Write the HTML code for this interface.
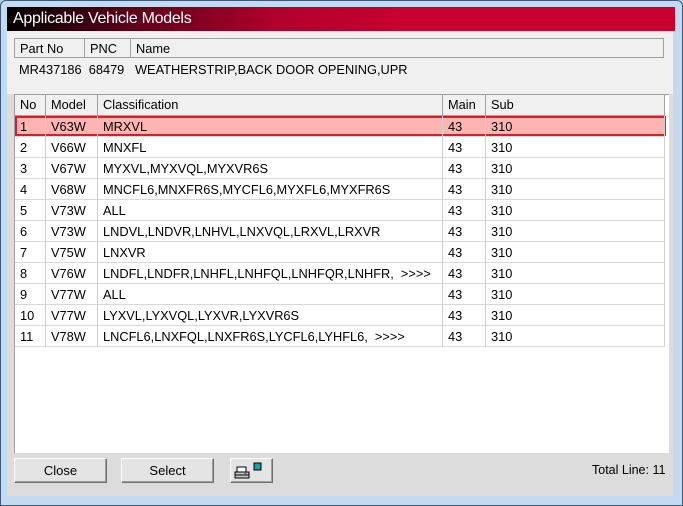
<!DOCTYPE html>
<html><head><meta charset="utf-8"><style>
*{box-sizing:border-box;margin:0;padding:0}
body{width:683px;height:506px;overflow:hidden;background:#b9d1ea;font-family:"Liberation Sans",Arial,sans-serif;font-size:12.8px;color:#000;position:relative}
.frame{position:absolute;left:0;top:0;width:683px;height:506px;border:1px solid #3c5a78;border-radius:6px 6px 0 0;background:#c4daf0}
.title{position:absolute;left:7px;top:7px;width:668px;height:24px;background:linear-gradient(90deg,#000 0%,#5a0018 18%,#b0002c 40%,#c8002f 60%,#c8002f 100%);color:#fff;font-size:16px;line-height:24px;padding-left:6px;letter-spacing:-0.3px}
.content{position:absolute;left:7px;top:31px;width:666px;height:465px;background:#dcdcdc}
.info{position:absolute;left:7px;top:31px;width:666px;height:63px;background:#f0f0f0}
.abs{position:absolute;white-space:nowrap}
.hdr{position:absolute;background:#f0f0f0;border:1px solid #a0a0a0;height:20px}
.hc{position:absolute;top:0;height:19px;line-height:19px;padding-left:5px;border-right:1px solid #a0a0a0;white-space:nowrap}
.body{position:absolute;left:14px;top:94px;width:655px;height:359px;background:#fff;border-left:1px solid #a0a0a0;border-top:1px solid #a0a0a0}
.row{position:absolute;left:0;width:650px;height:21px;border-bottom:1px solid #d8d8d8}
.c{position:absolute;top:0;height:21px;line-height:22px;padding-left:5px;border-right:1px solid #d0d0d0;white-space:nowrap}
.btn{position:absolute;top:458px;height:25px;background:#e4e4e4;border:1px solid;border-color:#fff #707070 #707070 #fff;box-shadow:inset -1px -1px 0 #a0a0a0;text-align:center;line-height:23px;font-size:13px}
</style></head><body>
<div class="frame"></div>
<div class="title">Applicable Vehicle Models</div>
<div class="content"></div>
<div class="info"></div>
<div class="hdr" style="left:14px;top:38px;width:650px">
<div class="hc" style="left:0;width:70px">Part No</div>
<div class="hc" style="left:70px;width:46px">PNC</div>
<div class="hc" style="left:116px;width:533px;border-right:none">Name</div>
</div>
<div class="abs" style="left:19px;top:62px">MR437186&nbsp;&nbsp;68479&nbsp;&nbsp;&nbsp;WEATHERSTRIP,BACK DOOR OPENING,UPR</div>
<div class="body">
<div class="hdr" style="left:-1px;top:-1px;width:651px;height:22px">
<div class="hc" style="left:0;width:31px;height:20px;line-height:20px">No</div>
<div class="hc" style="left:31px;width:52px;height:20px;line-height:20px">Model</div>
<div class="hc" style="left:83px;width:345px;height:20px;line-height:20px">Classification</div>
<div class="hc" style="left:428px;width:43px;height:20px;line-height:20px">Main</div>
<div class="hc" style="left:471px;width:178px;height:20px;line-height:20px;border-right:none">Sub</div>
</div>
<div style="position:absolute;left:0;top:21px;width:651px;height:20px;background:#ffb4b4;border:2px solid #d4202a"></div>
<div id="rows"></div>
</div>
<div class="btn" style="left:14px;width:93px">Close</div>
<div class="btn" style="left:121px;width:93px">Select</div>
<div class="btn" style="left:230px;width:43px">
<svg width="43" height="25" style="position:absolute;left:-1px;top:-1px" viewBox="0 0 43 25">
<rect x="7" y="9" width="9" height="5" fill="#fff" stroke="#000"/>
<path d="M5 14h14v6H5z" fill="#c8c8c8" stroke="#000"/>
<path d="M5 17h14" stroke="#000"/><rect x="14" y="15" width="3" height="1" fill="#0c0"/>
<rect x="24" y="5" width="7" height="7" fill="#1aa0a0" stroke="#000"/>
</svg></div>
<div class="abs" style="left:592px;top:463px;font-size:12.5px">Total Line: 11</div>
<script>
var d=[["1","V63W","MRXVL"],["2","V66W","MNXFL"],["3","V67W","MYXVL,MYXVQL,MYXVR6S"],["4","V68W","MNCFL6,MNXFR6S,MYCFL6,MYXFL6,MYXFR6S"],["5","V73W","ALL"],["6","V73W","LNDVL,LNDVR,LNHVL,LNXVQL,LRXVL,LRXVR"],["7","V75W","LNXVR"],["8","V76W","LNDFL,LNDFR,LNHFL,LNHFQL,LNHFQR,LNHFR,&nbsp;&nbsp;&gt;&gt;&gt;&gt;"],["9","V77W","ALL"],["10","V77W","LYXVL,LYXVQL,LYXVR,LYXVR6S"],["11","V78W","LNCFL6,LNXFQL,LNXFR6S,LYCFL6,LYHFL6,&nbsp;&nbsp;&gt;&gt;&gt;&gt;"]];
var h="";d.forEach(function(r,i){h+='<div class="row" style="top:'+(21+i*21)+'px">'+
'<div class="c" style="left:0;width:31px">'+r[0]+'</div><div class="c" style="left:31px;width:52px">'+r[1]+'</div><div class="c" style="left:83px;width:345px">'+r[2]+'</div><div class="c" style="left:428px;width:43px">43</div><div class="c" style="left:471px;width:179px">310</div></div>';});
document.getElementById("rows").innerHTML=h;
</script>
</body></html>
